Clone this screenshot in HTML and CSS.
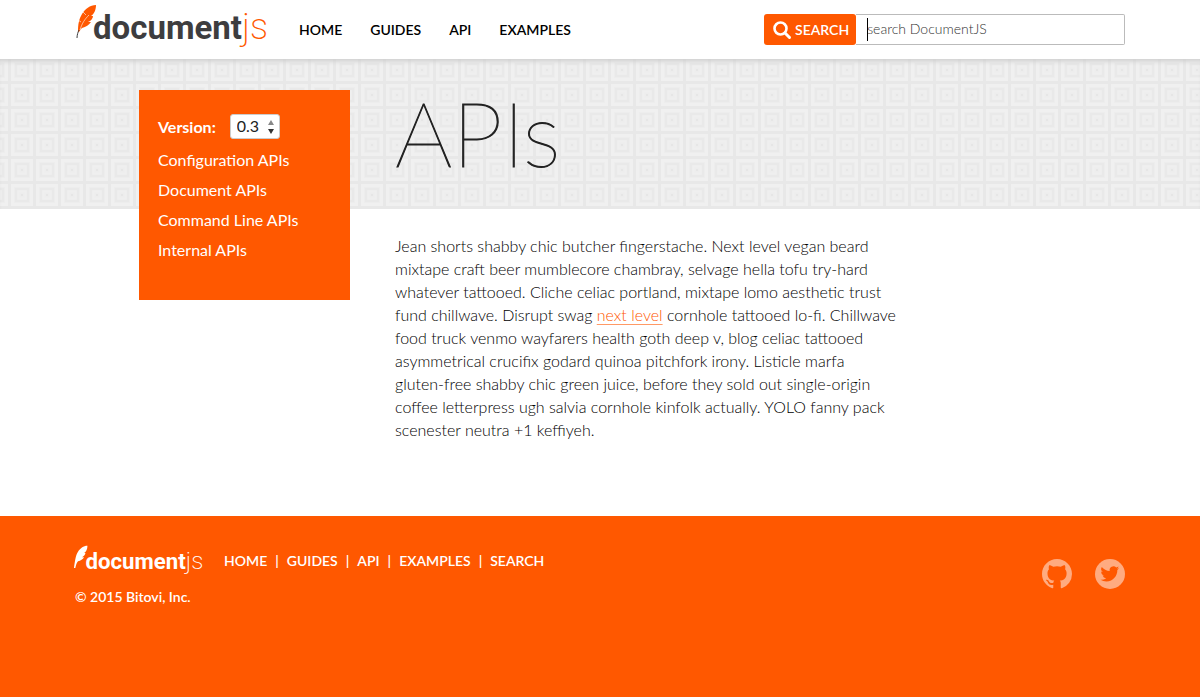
FILE: index.html
```
<!DOCTYPE html>
<html lang="en">
<head>
<meta charset="utf-8">
<meta name="viewport" content="width=device-width, initial-scale=1">
<title>APIs - DocumentJS</title>
<link rel="stylesheet" href="styles.css">
</head>
<body>
<header class="site-header">
  <div class="container header-row">
    <a class="logo" href="#" aria-label="DocumentJS">
      <svg viewBox="0 0 192 46" width="192" height="46">
        <path fill="#ff5800" d="M21 1 C15 1 10 5 7 10 C4 15 3 20 3 28 L4 28 C5 26 6 25 7 24 C11 23 14 21 16 18 L13 18 C16 17 18 14 18 12 L16 12 C19 10 21 6 21 1 Z"/>
        <path stroke="#fff" stroke-width=".6" fill="none" d="M14 11 C10 15 7 19 5 26 M3 16 L6 18 M8 8 L11 11"/>
        <path stroke="#3d3d3f" stroke-width="1" fill="none" d="M4 26 C3 28 2 31 2 34"/>
        <text class="logo-name" x="18" y="35">document</text>
        <text class="logo-suffix" x="167" y="35">js</text>
      </svg>
    </a>
    <nav class="main-nav" aria-label="Main">
      <a href="#">HOME</a>
      <a href="#">GUIDES</a>
      <a href="#">API</a>
      <a href="#">EXAMPLES</a>
    </nav>
    <form class="search">
      <button class="search-button" type="submit">
        <svg viewBox="0 0 18 18" width="18" height="18" fill="none" stroke="#fff"><circle cx="7.5" cy="7.5" r="6" stroke-width="2.6"/><path d="M12 12 L16.5 16.5" stroke-width="3" stroke-linecap="round"/></svg>
        SEARCH
      </button>
      <span class="search-field">
        <input type="text" aria-label="Search" placeholder="search DocumentJS">
      </span>
    </form>
  </div>
</header>

<main class="page">
  <div class="band"></div>
  <aside class="sidebar">
    <div class="version">
      <label for="version">Version:</label>
      <span class="version-select">
        <select id="version"><option>0.3</option></select>
        <svg viewBox="0 0 8 14" width="8" height="14"><path fill="#888" d="M4 0 L7 5 H1 Z"/><path fill="#333" d="M4 14 L7 9 H1 Z"/></svg>
      </span>
    </div>
    <nav class="side-nav" aria-label="Sections">
      <a href="#">Configuration APIs</a>
      <a href="#">Document APIs</a>
      <a href="#">Command Line APIs</a>
      <a href="#">Internal APIs</a>
    </nav>
  </aside>
  <h1 class="title">APIs</h1>
  <article class="content">
    <p>Jean shorts shabby chic butcher fingerstache. Next level vegan beard mixtape craft beer mumblecore chambray, selvage hella tofu try-hard whatever tattooed. Cliche celiac portland, mixtape lomo aesthetic trust fund chillwave. Disrupt swag <a href="#">next level</a> cornhole tattooed lo-fi. Chillwave food truck venmo wayfarers health goth deep v, blog celiac tattooed asymmetrical crucifix godard quinoa pitchfork irony. Listicle marfa <span class="nowrap">gluten-free</span> shabby chic green juice, before they sold out single-origin coffee letterpress ugh salvia cornhole kinfolk actually. YOLO fanny pack scenester neutra +1 keffiyeh.</p>
  </article>
</main>

<footer class="site-footer">
  <div class="container footer-row">
    <div>
      <div class="footer-links">
        <a class="footer-logo" href="#" aria-label="DocumentJS">
          <svg viewBox="3 0 189 46" width="128" height="31">
            <path fill="#fff" d="M21 1 C15 1 10 5 7 10 C4 15 3 20 1 34 L3 34 C4 30 5 26 7 24 C11 23 14 21 16 18 L13 18 C16 17 18 14 18 12 L16 12 C19 10 21 6 21 1 Z"/>
            <text class="logo-name" x="18" y="35">document</text>
            <text class="logo-suffix" x="167" y="35">js</text>
          </svg>
        </a>
        <nav class="footer-nav" aria-label="Footer">
          <a href="#">HOME</a><span>|</span><a href="#">GUIDES</a><span>|</span><a href="#">API</a><span>|</span><a href="#">EXAMPLES</a><span>|</span><a href="#">SEARCH</a>
        </nav>
      </div>
      <p class="copyright">© 2015 Bitovi, Inc.</p>
    </div>
    <div class="social">
      <a href="#" aria-label="GitHub">
        <svg viewBox="0 0 16 16" width="30" height="30"><path fill="#ffab80" d="M8 0C3.58 0 0 3.58 0 8c0 3.54 2.29 6.53 5.47 7.59.4.07.55-.17.55-.38 0-.19-.01-.82-.01-1.49-2.01.37-2.53-.49-2.69-.94-.09-.23-.48-.94-.82-1.13-.28-.15-.68-.52-.01-.53.63-.01 1.08.58 1.23.82.72 1.21 1.87.87 2.33.66.07-.52.28-.87.51-1.07-1.78-.2-3.64-.89-3.64-3.95 0-.87.31-1.59.82-2.15-.08-.2-.36-1.02.08-2.12 0 0 .67-.21 2.2.82.64-.18 1.32-.27 2-.27s1.36.09 2 .27c1.53-1.04 2.2-.82 2.2-.82.44 1.1.16 1.92.08 2.12.51.56.82 1.27.82 2.15 0 3.07-1.87 3.75-3.65 3.95.29.25.54.73.54 1.48 0 1.07-.01 1.93-.01 2.2 0 .21.15.46.55.38A8.01 8.01 0 0 0 16 8c0-4.42-3.58-8-8-8Z"/></svg>
      </a>
      <a href="#" aria-label="Twitter">
        <svg viewBox="0 0 30 30" width="30" height="30"><circle cx="15" cy="15" r="15" fill="#ffab80"/><path fill="#ff5800" transform="translate(5.5 5.5) scale(.78)" d="M23.95 4.57a10 10 0 0 1-2.82.77 4.96 4.96 0 0 0 2.16-2.72c-.95.55-2 .95-3.13 1.18a4.92 4.92 0 0 0-8.38 4.48C7.69 8.1 4.07 6.13 1.64 3.16a4.92 4.92 0 0 0 1.52 6.57 4.9 4.9 0 0 1-2.23-.61v.06a4.92 4.92 0 0 0 3.95 4.83 5 5 0 0 1-2.21.08 4.94 4.94 0 0 0 4.6 3.42A9.87 9.87 0 0 1 0 19.54a14 14 0 0 0 7.55 2.21c9.05 0 14-7.5 14-13.98 0-.21 0-.42-.02-.63a9.94 9.94 0 0 0 2.42-2.57Z"/></svg>
      </a>
    </div>
  </div>
</footer>
</body>
</html>
```
FILE: styles.css
```
* { box-sizing: border-box; }

body {
  margin: 0;
  min-height: 100vh;
  display: flex;
  flex-direction: column;
  background: #fff;
  color: #000;
  font: 16px/23px Lato, "Open Sans", sans-serif;
}

a { text-decoration: none; color: inherit; }
svg { display: block; overflow: visible; }

.container {
  width: 100%;
  max-width: 1082px;
  margin: 0 auto;
  padding: 0 16px;
}

.site-header { background: #fff; }
.header-row {
  display: flex;
  align-items: center;
  height: 59px;
}
.logo { margin-bottom: 6px; }
.logo-name {
  font-family: Roboto, sans-serif;
  font-weight: 700;
  font-size: 33px;
  fill: #3d3d3f;
}
.logo-suffix {
  font-family: Roboto, sans-serif;
  font-weight: 200;
  font-size: 36px;
  fill: #ff5800;
}

.main-nav {
  display: flex;
  gap: 28px;
  margin-left: 32px;
  font-size: 14px;
  font-weight: 600;
  color: #000;
}

.search {
  display: flex;
  margin-left: auto;
  width: 361px;
  height: 31px;
}
.search-button {
  display: flex;
  align-items: center;
  gap: 4px;
  padding: 0 7px 0 9px;
  border: 0;
  border-radius: 3px;
  background: #ff5800;
  color: #fff;
  font: 600 14px/20px Lato, sans-serif;
}
.search-field {
  position: relative;
  flex: 1;
}
.search-field::before {
  content: "";
  position: absolute;
  left: 11px;
  top: 4px;
  width: 1px;
  height: 23px;
  background: #000;
}
.search-field input {
  width: 100%;
  height: 100%;
  padding: 0 11px 2px;
  border: 1px solid #bbb;
  border-left: 0;
  border-radius: 0 2px 2px 0;
  background: #fff;
  font: 300 14px/20px Lato, sans-serif;
}
.search-field input::placeholder { color: #333; opacity: 1; }

.page {
  display: grid;
  grid-template-columns: minmax(16px, 139fr) 211px minmax(0, 557px) minmax(16px, 293fr);
  grid-template-rows: 150px auto;
}
.band {
  grid-area: 1 / 1 / 2 / -1;
  box-shadow: inset 0 5px 5px -3px #ccc;
  background: #ececec url("data:image/svg+xml,%3Csvg xmlns='http://www.w3.org/2000/svg' width='25' height='25' fill='none'%3E%3Cpath d='M0 0H25V25H0Z' fill='%23ededed'/%3E%3Cpath d='M0 1.5H25M1.5 0V25' stroke='%23e8e8e8' stroke-width='3'/%3E%3Cpath d='M4.5 4.5H23.5V23.5H4.5Z' stroke='%23f0f0f0' stroke-width='3'/%3E%3Cpath d='M8 8H20V20H8Z' stroke='%23e9e9e9' stroke-width='2'/%3E%3Cpath d='M10.5 10.5H17.5V17.5H10.5Z' stroke='%23efefef' stroke-width='2'/%3E%3Cpath d='M13 13H15V15H13Z' fill='%23e6e6e6'/%3E%3C/svg%3E") 8px -3px;
}
.sidebar {
  grid-area: 1 / 2 / 3 / 3;
  align-self: start;
  margin-top: 31px;
  min-height: 210px;
  padding: 24px 19px;
  background: #ff5800;
  color: #fff;
}
.version {
  display: flex;
  align-items: center;
  gap: 14px;
  font-weight: 700;
}
.version-select { position: relative; }
.version-select select {
  display: block;
  appearance: none;
  width: 50px;
  height: 25px;
  padding: 0 6px 2px;
  border: 1px solid #ccc;
  border-radius: 3px;
  background: #fff;
  color: #222;
  font: 400 16px/20px Lato, sans-serif;
}
.version-select svg {
  position: absolute;
  right: 5px;
  top: 6px;
  pointer-events: none;
}
.side-nav {
  display: flex;
  flex-direction: column;
  margin-top: 6px;
  line-height: 30px;
}

.title {
  grid-area: 1 / 3 / 2 / 4;
  margin: 0;
  padding: 19px 0 0 45px;
  font-size: 90px;
  line-height: 108px;
  font-weight: 100;
  color: #222;
  -webkit-text-stroke: 1px #222;
}
.content {
  grid-area: 2 / 3 / 3 / 4;
  padding: 25px 0 75px 45px;
  font-weight: 300;
}
.content p { margin: 0; }
.content a {
  color: #ff5800;
  text-decoration: underline 1px #ff9a66;
  text-underline-offset: 3px;
}
.nowrap { white-space: nowrap; }

.site-footer {
  flex: 1;
  background: #ff5800;
  color: #fff;
  font-size: 14px;
  font-weight: 600;
}
.footer-row {
  display: flex;
  justify-content: space-between;
  padding-top: 29px;
}
.footer-links {
  display: flex;
  align-items: center;
  gap: 21px;
}
.footer-logo .logo-name,
.footer-logo .logo-suffix { fill: #fff; }
.footer-nav { display: flex; gap: 8px; }
.copyright { margin: 9px 0 0; }
.social {
  display: flex;
  gap: 23px;
  padding-top: 14px;
}
```
